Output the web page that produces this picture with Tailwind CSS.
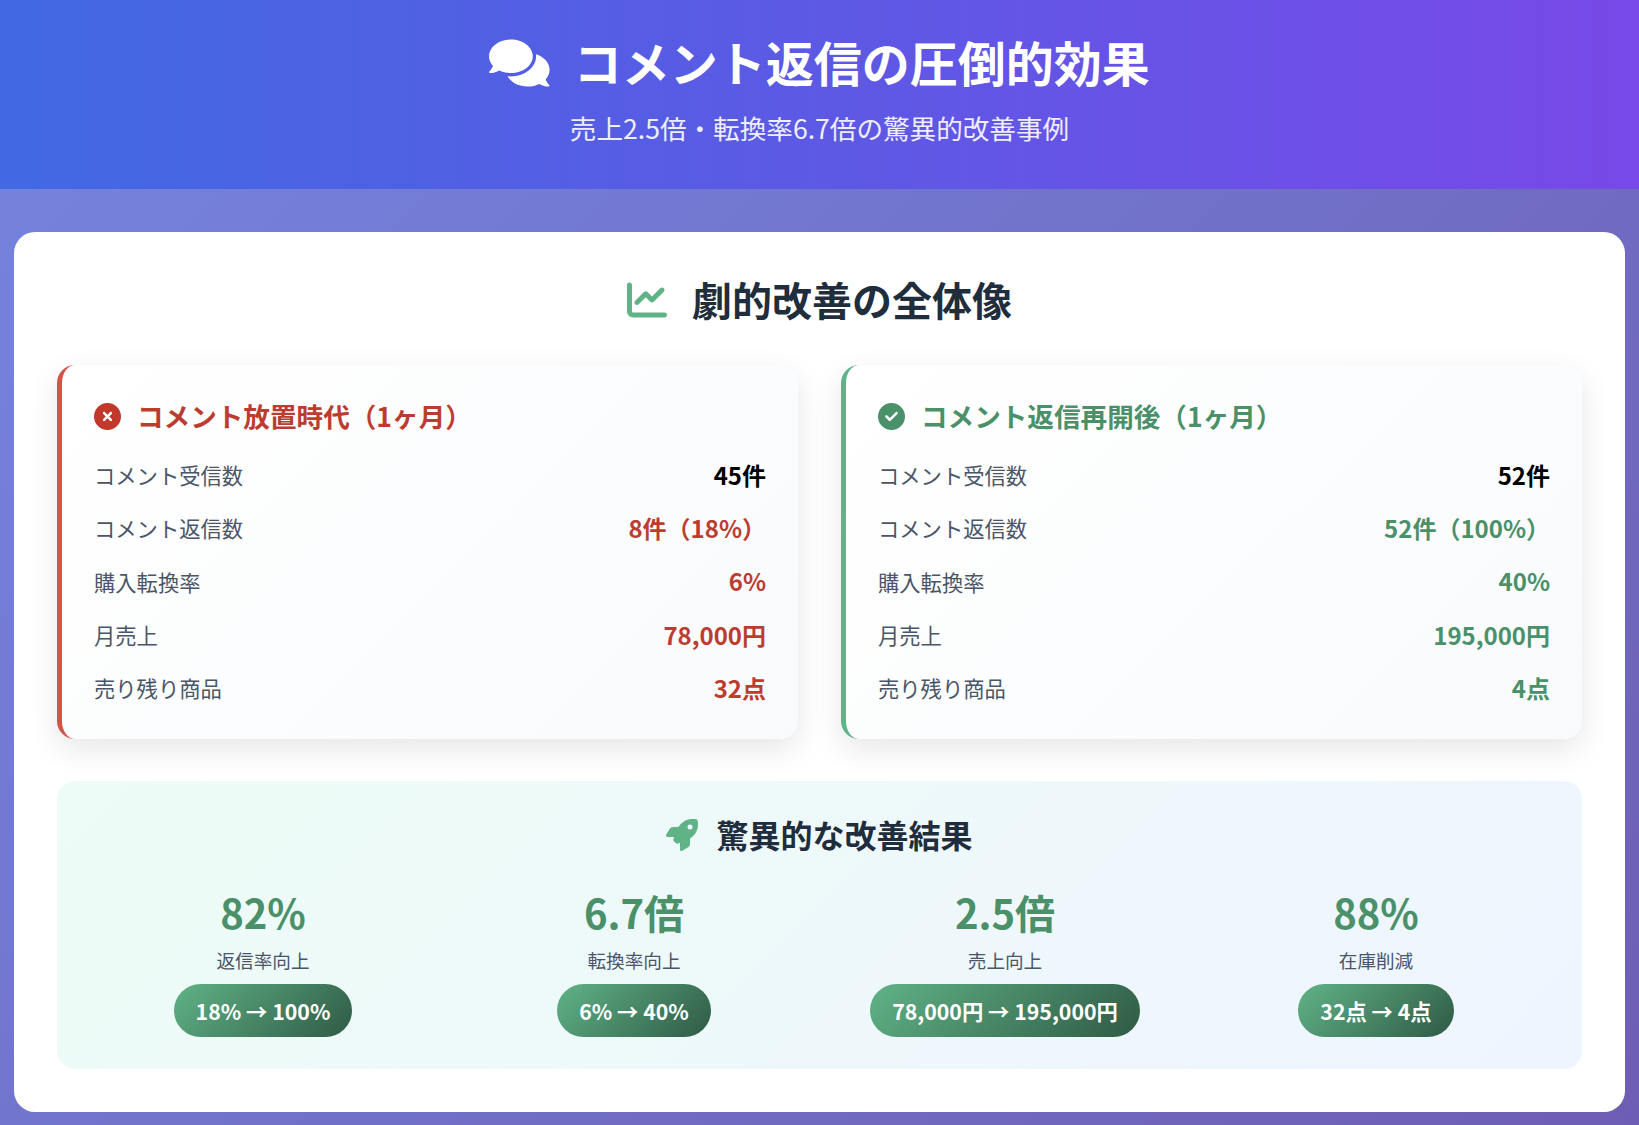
<!DOCTYPE html>
<html lang="ja">
<head>
    <meta charset="UTF-8">
    <title>コメント返信の圧倒的効果</title>
    <script src="https://cdn.jsdelivr.net/npm/@tailwindcss/browser@4"></script>
</head>
<body class="min-h-[1125px] bg-linear-[135deg,#7585e0,#6e5eb3] font-['Noto_Sans_CJK_JP','Noto_Sans',sans-serif]">
    <header class="h-[189px] bg-linear-[90deg,#4169e1,#7849e8] flex flex-col items-center pt-[26px] text-white">
        <h1 class="flex items-center gap-[24px] text-[48px] font-bold leading-[70px]">
            <svg class="mt-[4px] w-[60.6px] h-[54px] fill-white" viewBox="0 0 576 512"><path d="M416 192c0-88.4-93.1-160-208-160S0 103.6 0 192c0 34.3 14.1 65.9 38 92-13.4 30.2-35.5 54.2-35.8 54.5-2.2 2.3-2.8 5.7-1.5 8.7S4.8 352 8 352c36.6 0 66.9-12.3 88.7-25 32.2 15.7 70.3 25 111.3 25 114.9 0 208-71.6 208-160zm122 220c23.9-26 38-57.7 38-92 0-66.9-53.5-124.2-129.3-148.1.9 6.6 1.3 13.3 1.3 20.1 0 105.9-107.7 192-240 192-10.8 0-21.3-.8-31.7-1.9C207.8 439.6 281.8 480 368 480c41 0 79.1-9.2 111.3-25 21.8 12.7 52.1 25 88.7 25 3.2 0 6.1-1.9 7.3-4.8 1.3-2.9.7-6.3-1.5-8.7-.3-.3-22.4-24.2-35.8-54.5z"/></svg>
            コメント返信の圧倒的効果
        </h1>
        <p class="mt-[13px] text-[26.6px] leading-[38px] text-white/90">売上2.5倍・転換率6.7倍の驚異的改善事例</p>
    </header>

    <main class="pt-[43px] px-[14px]">
        <div class="h-[880px] bg-white rounded-[21px] p-[43px] pt-[38px]">
            <h2 class="flex items-center justify-center gap-[25px] text-[40px] font-bold leading-[58px] text-[#1f2d3d]">
                <svg class="mt-[2px] w-[40px] h-[40px] fill-[#60b387]" viewBox="0 0 512 512"><path d="M64 64c0-17.7-14.3-32-32-32S0 46.3 0 64V400c0 44.2 35.8 80 80 80H480c17.7 0 32-14.3 32-32s-14.3-32-32-32H80c-8.8 0-16-7.2-16-16V64zm406.6 86.6c12.5-12.5 12.5-32.8 0-45.3s-32.8-12.5-45.3 0L320 210.7l-57.4-57.4c-12.5-12.5-32.8-12.5-45.3 0l-112 112c-12.5 12.5-12.5 32.8 0 45.3s32.8 12.5 45.3 0L240 221.3l57.4 57.4c12.5 12.5 32.8 12.5 45.3 0l128-128z"/></svg>
                劇的改善の全体像
            </h2>

            <div class="grid grid-cols-2 gap-[43px] mt-[37px]">
                <section class="h-[374px] rounded-[18px] border-l-[5px] border-[#d0564a] bg-linear-[135deg,#ffffff,#f8fafc] pl-[32px] pr-[32px] pt-[32px] shadow-[0_10px_30px_rgba(0,0,0,0.1)]">
                    <h3 class="flex items-center gap-[16px] text-[26.6px] font-bold leading-[38px] text-[#bc3d30]">
                        <svg class="w-[27px] h-[27px] fill-[#c0392b]" viewBox="0 0 512 512"><path d="M256 512A256 256 0 1 0 256 0a256 256 0 1 0 0 512zM175 175c9.4-9.4 24.6-9.4 33.9 0l47 47 47-47c9.4-9.4 24.6-9.4 33.9 0s9.4 24.6 0 33.9l-47 47 47 47c9.4 9.4 9.4 24.6 0 33.9s-24.6 9.4-33.9 0l-47-47-47 47c-9.4 9.4-24.6 9.4-33.9 0s-9.4-24.6 0-33.9l47-47-47-47c-9.4-9.4-9.4-24.6 0-33.9z"/></svg>
                        コメント放置時代（1ヶ月）
                    </h3>
                    <dl class="mt-[13px] text-[21.3px] text-[#4a5568]">
                        <div class="flex items-center justify-between h-[53.4px]"><dt>コメント受信数</dt><dd class="text-[24px] font-bold text-black">45件</dd></div>
                        <div class="flex items-center justify-between h-[53.4px]"><dt>コメント返信数</dt><dd class="text-[24px] font-bold text-[#bc3d30]">8件（18%）</dd></div>
                        <div class="flex items-center justify-between h-[53.4px]"><dt>購入転換率</dt><dd class="text-[24px] font-bold text-[#bc3d30]">6%</dd></div>
                        <div class="flex items-center justify-between h-[53.4px]"><dt>月売上</dt><dd class="text-[24px] font-bold text-[#bc3d30]">78,000円</dd></div>
                        <div class="flex items-center justify-between h-[53.4px]"><dt>売り残り商品</dt><dd class="text-[24px] font-bold text-[#bc3d30]">32点</dd></div>
                    </dl>
                </section>

                <section class="h-[374px] rounded-[18px] border-l-[5px] border-[#60b387] bg-linear-[135deg,#ffffff,#f8fafc] pl-[32px] pr-[32px] pt-[32px] shadow-[0_10px_30px_rgba(0,0,0,0.1)]">
                    <h3 class="flex items-center gap-[16px] text-[26.6px] font-bold leading-[38px] text-[#4a9069]">
                        <svg class="w-[27px] h-[27px] fill-[#4a9069]" viewBox="0 0 512 512"><path d="M256 512A256 256 0 1 0 256 0a256 256 0 1 0 0 512zM369 209L241 337c-9.4 9.4-24.6 9.4-33.9 0l-64-64c-9.4-9.4-9.4-24.6 0-33.9s24.6-9.4 33.9 0l47 47L335 175c9.4-9.4 24.6-9.4 33.9 0s9.4 24.6 0 33.9z"/></svg>
                        コメント返信再開後（1ヶ月）
                    </h3>
                    <dl class="mt-[13px] text-[21.3px] text-[#4a5568]">
                        <div class="flex items-center justify-between h-[53.4px]"><dt>コメント受信数</dt><dd class="text-[24px] font-bold text-black">52件</dd></div>
                        <div class="flex items-center justify-between h-[53.4px]"><dt>コメント返信数</dt><dd class="text-[24px] font-bold text-[#4a9069]">52件（100%）</dd></div>
                        <div class="flex items-center justify-between h-[53.4px]"><dt>購入転換率</dt><dd class="text-[24px] font-bold text-[#4a9069]">40%</dd></div>
                        <div class="flex items-center justify-between h-[53.4px]"><dt>月売上</dt><dd class="text-[24px] font-bold text-[#4a9069]">195,000円</dd></div>
                        <div class="flex items-center justify-between h-[53.4px]"><dt>売り残り商品</dt><dd class="text-[24px] font-bold text-[#4a9069]">4点</dd></div>
                    </dl>
                </section>
            </div>

            <section class="h-[288px] mt-[42px] rounded-[18px] bg-linear-[135deg,#edfcf6,#eff5ff] px-[29px] pt-[29px]">
                <h3 class="flex items-center justify-center gap-[18px] text-[32px] font-bold leading-[48px] text-[#1f2d3d]">
                    <svg class="mt-[2px] w-[32px] h-[32px] fill-[#60b387]" viewBox="0 0 512 512"><path d="M156.6 384.9L125.7 354c-8.5-8.5-11.5-20.8-7.7-32.2c3-8.9 7-20.5 11.8-33.8L24 288c-8.6 0-16.6-4.6-20.9-12.1s-4.2-16.7 .2-24.1l52.5-88.5c13-21.9 36.5-35.3 61.9-35.3l82.3 0c2.4-4 4.8-7.7 7.2-11.3C289.1-4.1 411.1-8.1 483.9 5.3c11.6 2.1 20.6 11.2 22.8 22.8c13.4 72.9 9.3 194.8-111.4 276.7c-3.5 2.4-7.3 4.8-11.3 7.2v82.3c0 25.4-13.4 49-35.3 61.9l-88.5 52.5c-7.4 4.4-16.6 4.5-24.1 .2s-12.1-12.2-12.1-20.9V380.8c-14.1 4.9-26.4 8.9-35.7 11.9c-11.2 3.6-23.4 .5-31.8-7.8zM384 168a40 40 0 1 0 0-80 40 40 0 1 0 0 80z"/></svg>
                    驚異的な改善結果
                </h3>
                <div class="grid grid-cols-4 gap-[17px] mt-[24px]">
                    <div class="flex flex-col items-center">
                        <div class="text-[40px] font-bold leading-[60px] text-[#4a9069]">82%</div>
                        <div class="text-[18.6px] leading-[27px] text-[#4a5568] mt-[4px]">返信率向上</div>
                        <div class="mt-[11px] h-[53px] px-[22px] flex items-center rounded-full bg-linear-[135deg,#60b387,#2f5a45] text-[21.3px] font-bold text-white">18% → 100%</div>
                    </div>
                    <div class="flex flex-col items-center">
                        <div class="text-[40px] font-bold leading-[60px] text-[#4a9069]">6.7倍</div>
                        <div class="text-[18.6px] leading-[27px] text-[#4a5568] mt-[4px]">転換率向上</div>
                        <div class="mt-[11px] h-[53px] px-[22px] flex items-center rounded-full bg-linear-[135deg,#60b387,#2f5a45] text-[21.3px] font-bold text-white">6% → 40%</div>
                    </div>
                    <div class="flex flex-col items-center">
                        <div class="text-[40px] font-bold leading-[60px] text-[#4a9069]">2.5倍</div>
                        <div class="text-[18.6px] leading-[27px] text-[#4a5568] mt-[4px]">売上向上</div>
                        <div class="mt-[11px] h-[53px] px-[22px] flex items-center rounded-full bg-linear-[135deg,#60b387,#2f5a45] text-[21.3px] font-bold text-white">78,000円 → 195,000円</div>
                    </div>
                    <div class="flex flex-col items-center">
                        <div class="text-[40px] font-bold leading-[60px] text-[#4a9069]">88%</div>
                        <div class="text-[18.6px] leading-[27px] text-[#4a5568] mt-[4px]">在庫削減</div>
                        <div class="mt-[11px] h-[53px] px-[22px] flex items-center rounded-full bg-linear-[135deg,#60b387,#2f5a45] text-[21.3px] font-bold text-white">32点 → 4点</div>
                    </div>
                </div>
            </section>
        </div>
    </main>
</body>
</html>
